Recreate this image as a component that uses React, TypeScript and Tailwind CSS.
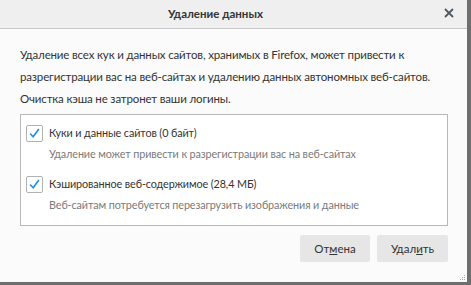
import React from 'react'

function Check() {
  return (
    <div className="w-[17px] h-[17px] shrink-0 rounded-[2px] border border-[#b1b1b1] bg-white flex items-center justify-center">
      <svg width="13" height="13" viewBox="0 0 13 13" fill="none">
        <path d="M2.5 7 L5.2 9.8 L10.5 2.5" stroke="#1e8ee6" strokeWidth="1.6" strokeLinecap="round" strokeLinejoin="round" />
      </svg>
    </div>
  )
}

function Option({ label, note }: { label: string; note: string }) {
  return (
    <div className="flex flex-col">
      <div className="h-[17px] flex items-center gap-[6px]">
        <Check />
        <span className="text-[#333] text-[10.8px] tracking-[-0.1px]">{label}</span>
      </div>
      <div className="pl-[23px] mt-[3px] leading-[17px] text-[#7a7a7a] text-[10.8px] tracking-[-0.1px]">{note}</div>
    </div>
  )
}

export default function App() {
  return (
    <div
      className="w-[471px] h-[285px] bg-[#6e6e6e] overflow-hidden"
      style={{ fontFamily: 'Lato, "Liberation Sans", sans-serif' }}
    >
      <div className="w-[467px] h-[282px] bg-[#fbfbfb] flex flex-col relative">
        {/* Title bar */}
        <div className="h-[29px] bg-[#efefef] border-b border-[#c8c8c8] flex items-center relative shrink-0">
          <div className="w-[431px] flex justify-center">
            <span className="text-[11.5px] font-bold text-[#333]">Удаление данных</span>
          </div>
          <span className="absolute right-[13px] top-[8px]">
            <svg width="10" height="10" viewBox="0 0 10 10">
              <path d="M1 1 L9 9 M9 1 L1 9" stroke="#505860" strokeWidth="1.8" />
            </svg>
          </span>
        </div>

        {/* Body */}
        <div className="px-[20px] pt-[15px] flex flex-col">
          <p className="text-[11.5px] tracking-[-0.15px] leading-[22px] text-[#333] w-[420px]">
            Удаление всех кук и данных сайтов, хранимых в Firefox, может привести к
            разрегистрации вас на веб-сайтах и удалению данных автономных веб-сайтов.
            Очистка кэша не затронет ваши логины.
          </p>

          <div className="mt-[4px] w-[428px] h-[112px] border border-[#b8b8b8] bg-white pl-[5px] pt-[10px] flex flex-col gap-[14px]">
            <Option label="Куки и данные сайтов (0 байт)" note="Удаление может привести к разрегистрации вас на веб-сайтах" />
            <Option label="Кэшированное веб-содержимое (28,4 МБ)" note="Веб-сайтам потребуется перезагрузить изображения и данные" />
          </div>

          <div className="mt-[9px] flex justify-end gap-[7px] w-[428px]">
            <button className="w-[70px] h-[27px] bg-[#e6e6e6] rounded-[2px] text-[11.5px] text-[#333]">
              От<span className="underline">м</span>ена
            </button>
            <button className="w-[71px] h-[27px] bg-[#e6e6e6] rounded-[2px] text-[11.5px] text-[#333]">
              Удал<span className="underline">и</span>ть
            </button>
          </div>
        </div>

        <svg className="absolute right-[1px] bottom-[1px]" width="6" height="6" viewBox="0 0 6 6">
          <rect x="4" y="0" width="1" height="1" fill="#aaa" />
          <rect x="2" y="2" width="1" height="1" fill="#aaa" />
          <rect x="4" y="2" width="1" height="1" fill="#aaa" />
          <rect x="0" y="4" width="1" height="1" fill="#aaa" />
          <rect x="2" y="4" width="1" height="1" fill="#aaa" />
          <rect x="4" y="4" width="1" height="1" fill="#aaa" />
        </svg>
      </div>
    </div>
  )
}
